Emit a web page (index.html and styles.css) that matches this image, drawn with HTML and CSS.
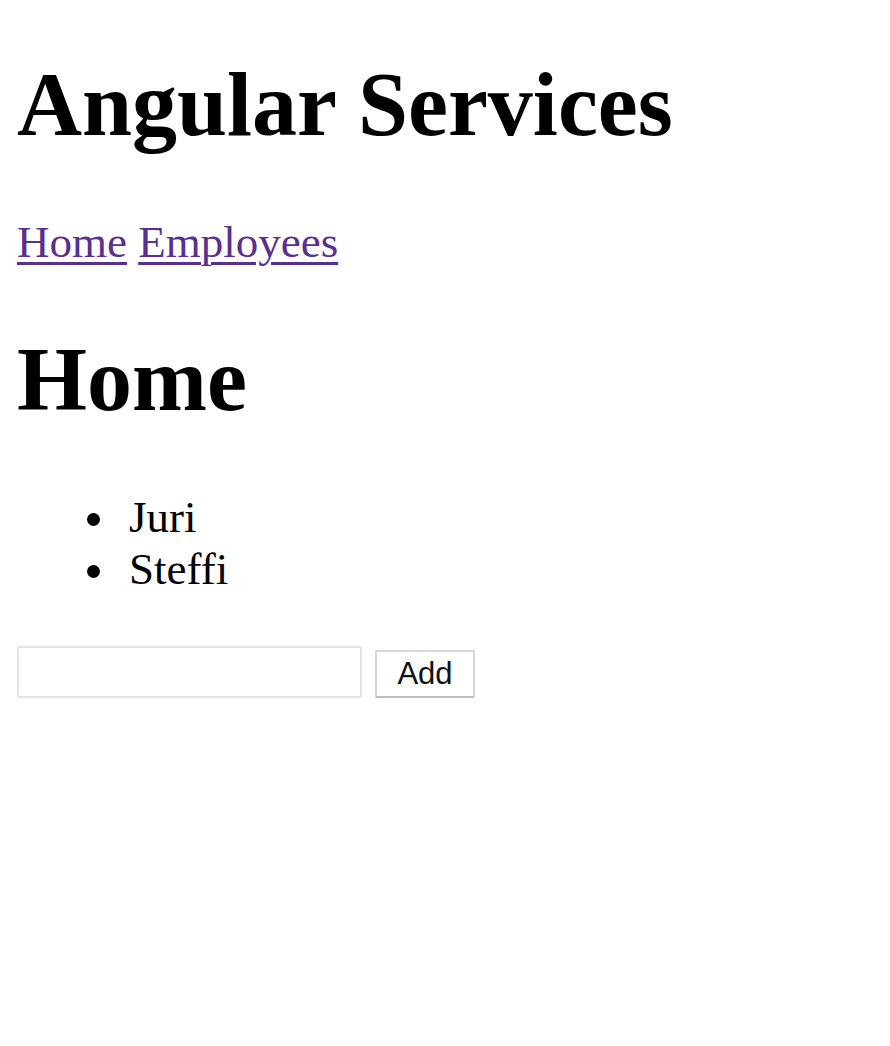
FILE: index.html
```html
<!DOCTYPE html>
<html>
<head>
<meta charset="utf-8">
<title>Angular Services</title>
<link rel="stylesheet" href="styles.css">
</head>
<body>
<div class="app">
  <h1 class="title">Angular Services</h1>
  <nav class="nav"><a href="#" class="link">Home</a> <a href="#" class="link">Employees</a></nav>
  <h1 class="page-title">Home</h1>
  <ul class="people">
    <li class="person">Juri</li>
    <li class="person">Steffi</li>
  </ul>
  <div class="add-form">
    <input type="text" class="name-input">
    <button class="add-btn">Add</button>
  </div>
</div>
</body>
</html>
```

FILE: styles.css
```css
html, body {
  margin: 0;
  padding: 0;
  background: #fff;
}
body {
  font-family: "Liberation Serif", "Times New Roman", serif;
  font-size: 45px;
  color: #000;
}
.app {
  padding: 0 17px;
  display: flow-root;
}
.title, .page-title {
  font-size: 90px;
  font-weight: bold;
  line-height: 103px;
  margin: 60px 0;
}
.title {
  margin-top: 53px;
}
.nav {
  line-height: 52px;
  margin: 0;
}
.link {
  color: #58308f;
  text-decoration: underline;
  text-decoration-thickness: 3px;
  text-underline-offset: 5px;
}
.people {
  margin: 60px 0 0;
  padding-left: 112px;
  line-height: 52px;
  list-style: none;
}
.person::before {
  content: "";
  display: inline-block;
  width: 13px;
  height: 13px;
  border-radius: 50%;
  background: #000;
  margin-left: -42px;
  margin-right: 29px;
  vertical-align: 6px;
}
.add-form {
  display: flex;
  align-items: flex-end;
  gap: 13px;
  margin-top: 51px;
}
.name-input {
  box-sizing: border-box;
  width: 345px;
  height: 52px;
  border: 2px solid #e3e3e3;
  border-radius: 3px;
  background: #fff;
  margin: 0;
  padding: 0 6px;
  font-size: 30px;
}
.add-btn {
  box-sizing: border-box;
  width: 100px;
  height: 48px;
  margin: 0;
  padding: 0;
  background: #fff;
  border: 2px solid #d6d6d6;
  border-bottom-color: #bdbdbd;
  border-radius: 2px;
  font-family: "Liberation Sans", Arial, sans-serif;
  font-size: 31px;
  color: #111;
}
```
